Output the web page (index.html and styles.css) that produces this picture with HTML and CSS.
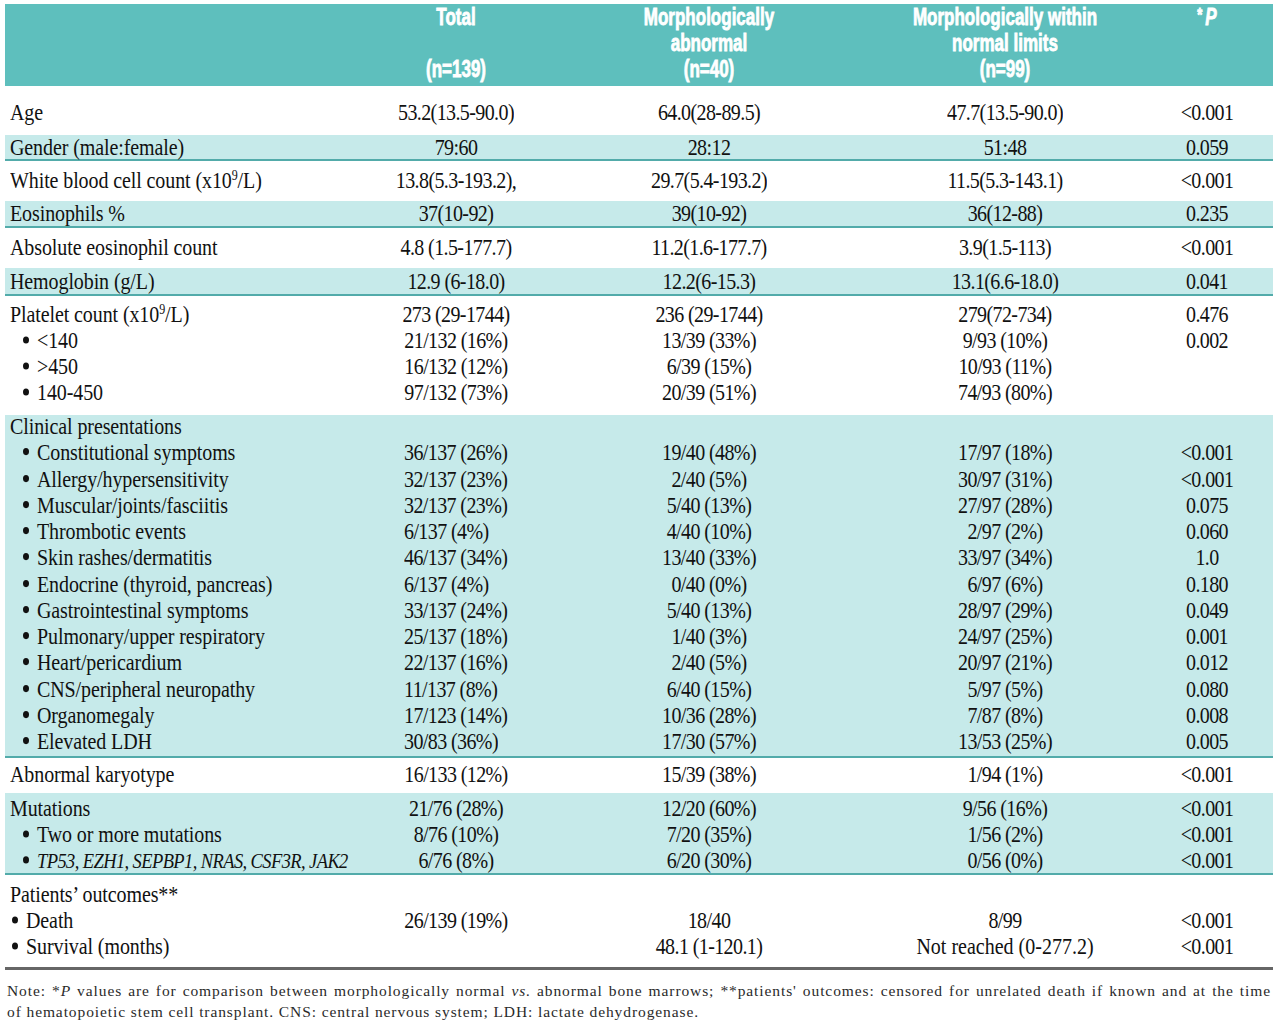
FILE: index.html
```html
<!DOCTYPE html>
<html lang="en">
<head>
<meta charset="utf-8">
<title>Table</title>
<link rel="stylesheet" href="styles.css">
</head>
<body>
<div class="table">
  <div class="head">
    <div class="hc"></div>
    <div class="hc"><span class="hl">Total</span><span class="hl">&nbsp;</span><span class="hl">(n=139)</span></div>
    <div class="hc"><span class="hl">Morphologically</span><span class="hl">abnormal</span><span class="hl">(n=40)</span></div>
    <div class="hc"><span class="hl">Morphologically within</span><span class="hl">normal limits</span><span class="hl">(n=99)</span></div>
    <div class="hc"><span class="hl hp"><span class="star">*</span><i>P</i></span></div>
  </div>

  <div class="sec s-age">
    <div class="row"><div class="lab">Age</div><div>53.2(13.5-90.0)</div><div>64.0(28-89.5)</div><div>47.7(13.5-90.0)</div><div>&lt;0.001</div></div>
  </div>
  <div class="sec band s-b24">
    <div class="row"><div class="lab">Gender (male:female)</div><div>79:60</div><div>28:12</div><div>51:48</div><div>0.059</div></div>
  </div>
  <div class="sec s-mid">
    <div class="row"><div class="lab">White blood cell count (x10<span class="sup">9</span>/L)</div><div>13.8(5.3-193.2),</div><div>29.7(5.4-193.2)</div><div>11.5(5.3-143.1)</div><div>&lt;0.001</div></div>
  </div>
  <div class="sec band s-b25">
    <div class="row"><div class="lab">Eosinophils %</div><div>37(10-92)</div><div>39(10-92)</div><div>36(12-88)</div><div>0.235</div></div>
  </div>
  <div class="sec s-mid">
    <div class="row"><div class="lab">Absolute eosinophil count</div><div>4.8 (1.5-177.7)</div><div>11.2(1.6-177.7)</div><div>3.9(1.5-113)</div><div>&lt;0.001</div></div>
  </div>
  <div class="sec band s-b26">
    <div class="row"><div class="lab">Hemoglobin (g/L)</div><div>12.9 (6-18.0)</div><div>12.2(6-15.3)</div><div>13.1(6.6-18.0)</div><div>0.041</div></div>
  </div>
  <div class="sec s-plt">
    <div class="row"><div class="lab">Platelet count (x10<span class="sup">9</span>/L)</div><div>273 (29-1744)</div><div>236 (29-1744)</div><div>279(72-734)</div><div>0.476</div></div>
    <div class="row"><div class="lab ind"><span class="b"></span>&lt;140</div><div>21/132 (16%)</div><div>13/39 (33%)</div><div>9/93 (10%)</div><div>0.002</div></div>
    <div class="row"><div class="lab ind"><span class="b"></span>&gt;450</div><div>16/132 (12%)</div><div>6/39 (15%)</div><div>10/93 (11%)</div><div></div></div>
    <div class="row"><div class="lab ind"><span class="b"></span>140-450</div><div>97/132 (73%)</div><div>20/39 (51%)</div><div>74/93 (80%)</div><div></div></div>
  </div>
  <div class="sec band s-clin">
    <div class="row"><div class="lab">Clinical presentations</div><div></div><div></div><div></div><div></div></div>
    <div class="row"><div class="lab ind"><span class="b"></span>Constitutional symptoms</div><div class="tl">36/137 (26%)</div><div>19/40 (48%)</div><div>17/97 (18%)</div><div>&lt;0.001</div></div>
    <div class="row"><div class="lab ind"><span class="b"></span>Allergy/hypersensitivity</div><div class="tl">32/137 (23%)</div><div>2/40 (5%)</div><div>30/97 (31%)</div><div>&lt;0.001</div></div>
    <div class="row"><div class="lab ind"><span class="b"></span>Muscular/joints/fasciitis</div><div class="tl">32/137 (23%)</div><div>5/40 (13%)</div><div>27/97 (28%)</div><div>0.075</div></div>
    <div class="row"><div class="lab ind"><span class="b"></span>Thrombotic events</div><div class="tl">6/137 (4%)</div><div>4/40 (10%)</div><div>2/97 (2%)</div><div>0.060</div></div>
    <div class="row"><div class="lab ind"><span class="b"></span>Skin rashes/dermatitis</div><div class="tl">46/137 (34%)</div><div>13/40 (33%)</div><div>33/97 (34%)</div><div>1.0</div></div>
    <div class="row"><div class="lab ind"><span class="b"></span>Endocrine (thyroid, pancreas)</div><div class="tl">6/137 (4%)</div><div>0/40 (0%)</div><div>6/97 (6%)</div><div>0.180</div></div>
    <div class="row"><div class="lab ind"><span class="b"></span>Gastrointestinal symptoms</div><div class="tl">33/137 (24%)</div><div>5/40 (13%)</div><div>28/97 (29%)</div><div>0.049</div></div>
    <div class="row"><div class="lab ind"><span class="b"></span>Pulmonary/upper respiratory</div><div class="tl">25/137 (18%)</div><div>1/40 (3%)</div><div>24/97 (25%)</div><div>0.001</div></div>
    <div class="row"><div class="lab ind"><span class="b"></span>Heart/pericardium</div><div class="tl">22/137 (16%)</div><div>2/40 (5%)</div><div>20/97 (21%)</div><div>0.012</div></div>
    <div class="row"><div class="lab ind"><span class="b"></span>CNS/peripheral neuropathy</div><div class="tl">11/137 (8%)</div><div>6/40 (15%)</div><div>5/97 (5%)</div><div>0.080</div></div>
    <div class="row"><div class="lab ind"><span class="b"></span>Organomegaly</div><div class="tl">17/123 (14%)</div><div>10/36 (28%)</div><div>7/87 (8%)</div><div>0.008</div></div>
    <div class="row"><div class="lab ind"><span class="b"></span>Elevated LDH</div><div class="tl">30/83 (36%)</div><div>17/30 (57%)</div><div>13/53 (25%)</div><div>0.005</div></div>
  </div>
  <div class="sec s-kar">
    <div class="row"><div class="lab">Abnormal karyotype</div><div>16/133 (12%)</div><div>15/39 (38%)</div><div>1/94 (1%)</div><div>&lt;0.001</div></div>
  </div>
  <div class="sec band s-mut">
    <div class="row"><div class="lab">Mutations</div><div>21/76 (28%)</div><div>12/20 (60%)</div><div>9/56 (16%)</div><div>&lt;0.001</div></div>
    <div class="row"><div class="lab ind"><span class="b"></span>Two or more mutations</div><div>8/76 (10%)</div><div>7/20 (35%)</div><div>1/56 (2%)</div><div>&lt;0.001</div></div>
    <div class="row"><div class="lab ind"><span class="b"></span><i class="gene">TP53, EZH1, SEPBP1, NRAS, CSF3R, JAK2</i></div><div>6/76 (8%)</div><div>6/20 (30%)</div><div>0/56 (0%)</div><div>&lt;0.001</div></div>
  </div>
  <div class="sec s-out">
    <div class="row"><div class="lab">Patients’ outcomes**</div><div></div><div></div><div></div><div></div></div>
    <div class="row"><div class="lab ind2"><span class="b"></span>Death</div><div>26/139 (19%)</div><div>18/40</div><div>8/99</div><div>&lt;0.001</div></div>
    <div class="row"><div class="lab ind2"><span class="b"></span>Survival (months)</div><div></div><div>48.1 (1-120.1)</div><div class="nr">Not reached (0-277.2)</div><div>&lt;0.001</div></div>
  </div>
</div>
<div class="note">
  <p class="n1">Note: *<i>P</i> values are for comparison between morphologically normal <i>vs.</i> abnormal bone marrows; **patients' outcomes: censored for unrelated death if known and at the time</p>
  <p class="n2">of hematopoietic stem cell transplant. CNS: central nervous system; LDH: lactate dehydrogenase.</p>
</div>
</body>
</html>
```

FILE: styles.css
```css
html, body {
  margin: 0;
  padding: 0;
  background: #ffffff;
}

body {
  font-family: "Liberation Serif", "Times New Roman", serif;
  color: #111111;
}

.table {
  width: 1268px;
  margin: 4px 0 0 5px;
}

.head {
  display: grid;
  grid-template-columns: 325px 252px 254px 338px 66px;
  background: #5ebfbd;
  padding: 1px 0 3px;
  height: 78px;
}

.hc {
  text-align: center;
  color: #ffffff;
  font-family: "Liberation Sans", Arial, sans-serif;
  font-weight: 700;
  font-size: 17px;
  line-height: 26px;
}

.hl {
  display: block;
  white-space: nowrap;
  transform: scaleY(1.4);
  -webkit-text-stroke: 0.6px #ffffff;
}

.hp {
  margin-top: -2px;
}

.star {
  font-size: 13px;
  vertical-align: 3px;
  margin-right: 3px;
}

.sec {
  background: #ffffff;
}

.band {
  background: #c6eaea;
  border-bottom: 2px solid #52abaa;
}

.row {
  display: grid;
  grid-template-columns: 325px 252px 254px 338px 66px;
  height: 26px;
  line-height: 26px;
  font-size: 20px;
}

.row > div {
  text-align: center;
  white-space: nowrap;
  transform: scaleY(1.18);
  letter-spacing: -0.6px;
}

.row > .lab {
  text-align: left;
  padding-left: 5px;
  letter-spacing: -0.1px;
}

.row > .lab.ind {
  padding-left: 18px;
}

.row > .lab.ind2 {
  padding-left: 7px;
}

.row > .tl {
  text-align: left;
  padding-left: 74px;
}

.row > .nr {
  letter-spacing: 0;
}

.b {
  display: inline-block;
  width: 6px;
  height: 6px;
  border-radius: 50%;
  background: #111111;
  margin-right: 8px;
  vertical-align: 4px;
}

.gene {
  font-size: 18.5px;
  letter-spacing: -0.6px;
}

.sup {
  font-size: 12px;
  line-height: 0;
  vertical-align: 7px;
}

/* section spacing */
.s-age { padding: 13px 0 10px; }
.s-mid { padding: 6px 0 8px; }
.s-b24 .row { height: 24px; line-height: 24px; }
.s-b25 .row { height: 25px; line-height: 25px; }
.s-b26 .row { height: 26px; line-height: 26px; }
.s-plt { padding: 5px 0 10px; }
.s-clin .row { height: 26.25px; line-height: 22px; }
.s-kar { padding: 3px 0 6px; }
.s-mut { padding: 2px 0 0; }
.s-out {
  padding: 6px 0 8px;
  border-bottom: 3px solid #666666;
}

.note {
  margin: 10px 0 0 7px;
  width: 1264px;
  font-family: "Liberation Serif", "Times New Roman", serif;
  font-size: 15.5px;
  line-height: 21px;
  letter-spacing: 0.9px;
  color: #2a2a2a;
}

.note p {
  margin: 0;
  white-space: nowrap;
}

.note .n1 {
  text-align: justify;
  text-align-last: justify;
  white-space: normal;
}
```
